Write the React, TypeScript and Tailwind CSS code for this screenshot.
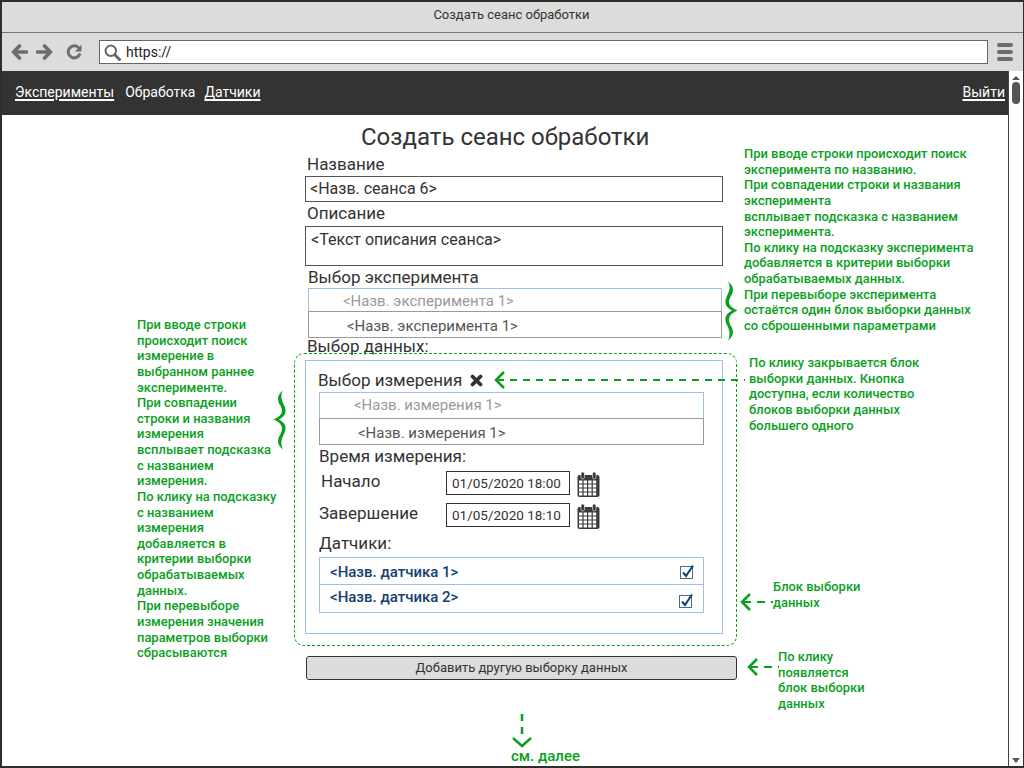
const noteClass = "absolute font-medium text-[12.95px] leading-[15.63px] text-[#0a9f1e] whitespace-pre"

function CalendarIcon() {
  return (
    <svg width="23" height="25" viewBox="0 0 23 25" className="text-[#3a3a3a]">
      <rect x="0.5" y="3" width="22" height="22" rx="2" fill="currentColor" />
      <rect x="4" y="0" width="3.5" height="7" rx="1.7" fill="currentColor" stroke="#fff" strokeWidth="0.6" />
      <rect x="15.5" y="0" width="3.5" height="7" rx="1.7" fill="currentColor" stroke="#fff" strokeWidth="0.6" />
      {[2, 6.6, 11.2, 15.8].map((x) =>
        [9, 13, 17, 21].map((y) => (
          <rect key={`${x}-${y}`} x={x} y={y - 0.5} width="3.4" height="3" fill="#fff" />
        ))
      )}
    </svg>
  )
}

function CheckIcon() {
  return (
    <svg width="16" height="16" viewBox="0 0 16 16">
      <rect x="1.5" y="2.5" width="12" height="12" fill="#fff" stroke="#4a6a90" strokeWidth="1" />
      <path d="M4 8.5 L7 12 L14 1.5" fill="none" stroke="#12406f" strokeWidth="2" />
    </svg>
  )
}

function BackIcon({ flip }: { flip?: boolean }) {
  return (
    <svg width="17" height="16" viewBox="0 0 17 16" className={flip ? '-scale-x-100' : ''}>
      <path d="M8.5 2 L2.5 8 L8.5 14 M3 8 H15.5" fill="none" stroke="#6d6d6d" strokeWidth="3.6" strokeLinecap="round" strokeLinejoin="round" />
    </svg>
  )
}

function ReloadIcon() {
  return (
    <svg width="16" height="16" viewBox="0 0 16 16">
      <path d="M13 4.2 A6 6 0 1 0 14 9.5" fill="none" stroke="#6d6d6d" strokeWidth="3" />
      <path d="M15.5 0.8 V7.5 H9 Z" fill="#6d6d6d" />
    </svg>
  )
}

function SearchIcon() {
  return (
    <svg width="17" height="17" viewBox="0 0 17 17">
      <circle cx="6.8" cy="6.8" r="5.2" fill="none" stroke="#666" strokeWidth="2" />
      <path d="M10.8 10.8 L15.5 15.5" fill="none" stroke="#666" strokeWidth="3" strokeLinecap="round" />
    </svg>
  )
}

function CloseIcon() {
  return (
    <svg width="13" height="13" viewBox="0 0 13 13">
      <path d="M2.5 2.5 L10.5 10.5 M10.5 2.5 L2.5 10.5" fill="none" stroke="#333" strokeWidth="3.8" strokeLinecap="round" />
    </svg>
  )
}

// left pointing dashed arrow used by the notes
function ArrowLeft({ className, width, dash }: { className: string; width: number; dash: string }) {
  return (
    <svg width={width} height="18" viewBox={`0 0 ${width} 18`} className={`absolute ${className}`}>
      <path d="M11 1 L3 9 L11 17" fill="none" stroke="#0a9f1e" strokeWidth="2.5" />
      <path d={`M4 9 H${width}`} fill="none" stroke="#0a9f1e" strokeWidth="2" strokeDasharray={dash} />
    </svg>
  )
}

function Brace({ className, flip }: { className: string; flip?: boolean }) {
  return (
    <svg width="15" height="60" viewBox="0 0 15 60" className={`absolute ${className} ${flip ? '-scale-x-100' : ''}`}>
      <path
        d="M10 0.5 C4 5 4 10 7 15 C10 20 11 25 0.5 29.5 C11 34 10 40 7 45 C4 50 4 55 10 59.5 C7.5 54 8 50 11 44 C14 38 13 33 6 29.5 C13 26 14 21 11 15 C8 9 7.5 5 10 0.5 Z"
        fill="#0a9f1e"
      />
    </svg>
  )
}

export default function App() {
  return (
    <div className="relative w-[1024px] h-[768px] overflow-hidden bg-white flex flex-col font-['Roboto',sans-serif] text-[#333] border-t-2 border-l-2 border-b-2 border-r border-[#2e2e2e]">
      {/* Title bar */}
      <div className="h-[31px] shrink-0 bg-[#dcdcda] border-b border-[#777] flex items-center justify-center text-[13px] pb-[5px] -ml-0.5">
        Создать сеанс обработки
      </div>

      {/* Toolbar */}
      <div className="h-[38px] shrink-0 bg-[#dcdcda] flex items-center pl-[9px] pr-[7px]">
        <BackIcon />
        <span className="ml-2"><BackIcon flip /></span>
        <span className="ml-[13px]"><ReloadIcon /></span>
        <div className="ml-[17px] h-[24px] w-[889px] bg-white border border-[#666] flex items-center pl-[4px] gap-[5px] text-[14px] text-[#222]">
          <SearchIcon />
          https://
        </div>
        <div className="ml-[9px] flex flex-col gap-[3px]">
          <div className="w-[16px] h-[4px] rounded-full bg-[#6d6d6d]" />
          <div className="w-[16px] h-[4px] rounded-full bg-[#6d6d6d]" />
          <div className="w-[16px] h-[4px] rounded-full bg-[#6d6d6d]" />
        </div>
      </div>

      <div className="relative flex-1 min-h-0">
        {/* Nav bar */}
        <div className="h-[44px] mr-[15px] bg-[#333] flex items-center pl-[13px] pr-[3px] pb-px text-[14px] text-white gap-[11px]">
          <span className="underline underline-offset-2 decoration-[1.5px]">Эксперименты</span>
          <span>Обработка</span>
          <span className="underline underline-offset-2 decoration-[1.5px] -ml-[2px]">Датчики</span>
          <span className="underline underline-offset-2 decoration-[1.5px] ml-auto">Выйти</span>
        </div>

        {/* Scrollbar */}
        <div className="absolute right-0 top-0 bottom-0 w-[15px] bg-white border-l border-[#444] flex flex-col items-center">
          <div className="mt-[5px] w-0 h-0 border-x-[4px] border-x-transparent border-b-[4px] border-b-[#555]" />
          <div className="mt-[2px] w-[8px] h-[22px] rounded-full bg-[#555]" />
          <div className="mt-auto mb-[3px] w-0 h-0 border-x-[4px] border-x-transparent border-t-[5px] border-t-[#555]" />
        </div>

        {/* Form column */}
        <div className="ml-[303px] w-[432px] flex flex-col">
          <h1 className="text-[24px] leading-[28px] mt-[8px] ml-[56px] whitespace-nowrap">Создать сеанс обработки</h1>
          <div className="text-[17px] leading-[20px] mt-[3px] ml-[2px]">Название</div>
          <div className="w-[418px] h-[26px] border border-[#555] flex items-center pl-[4px] text-[16px] mt-[2px]">&lt;Назв. сеанса 6&gt;</div>
          <div className="text-[17px] leading-[20px] mt-[1px] ml-[2px]">Описание</div>
          <div className="w-[418px] h-[40px] border border-[#555] pl-[5px] pt-[1px] text-[16px] mt-[3px]">&lt;Текст описания сеанса&gt;</div>
          <div className="text-[17px] leading-[20px] mt-[1px] ml-[3px]">Выбор эксперимента</div>
          <div className="ml-[3px] w-[414px] mt-[1px] text-[15px]">
            <div className="h-[23px] border border-b-0 border-[#9cbff0] flex items-center pl-[34px] pt-[2px] text-[#999]">&lt;Назв. эксперимента 1&gt;</div>
            <div className="h-[27px] border border-[#999] flex items-center pl-[38px] pt-[3px] text-[#555]">&lt;Назв. эксперимента 1&gt;</div>
          </div>
          <div className="text-[17px] leading-[18px] -mt-px ml-[2px]">Выбор данных:</div>

          {/* Selection block */}
          <div className="-ml-[11px] -mt-[2px] w-[443px] h-[293px] border border-dashed border-[#0a9f1e] rounded-[10px] pt-[6px] pl-[10px]">
            <div className="w-[418px] h-[274px] border border-[#9cbff0] pl-[13px] flex flex-col">
              <div className="flex items-center text-[17px] leading-[20px] mt-[9px] ml-[-1px] gap-[8px]">
                Выбор измерения
                <CloseIcon />
              </div>
              <div className="w-[385px] mt-[2px] text-[15px]">
                <div className="h-[26px] border border-b-0 border-[#9cbff0] flex items-center pl-[34px] text-[#999]">&lt;Назв. измерения 1&gt;</div>
                <div className="h-[27px] border border-[#999] flex items-center pl-[38px] pt-[3px] text-[#555]">&lt;Назв. измерения 1&gt;</div>
              </div>
              <div className="text-[17px] leading-[20px] mt-[1px]">Время измерения:</div>
              <div className="flex items-center mt-[5px] h-[24px]">
                <span className="w-[127px] pl-[2px] text-[17px] -mt-[3px]">Начало</span>
                <div className="w-[124px] h-[24px] border border-[#333] flex items-center pl-[5px] text-[13.5px]">01/05/2020 18:00</div>
                <span className="ml-[7px] mt-[2px]"><CalendarIcon /></span>
              </div>
              <div className="flex items-center mt-[8px] h-[24px]">
                <span className="w-[127px] text-[17px] -mt-[3px]">Завершение</span>
                <div className="w-[124px] h-[24px] border border-[#333] flex items-center pl-[5px] text-[13.5px]">01/05/2020 18:10</div>
                <span className="ml-[7px] mt-[2px]"><CalendarIcon /></span>
              </div>
              <div className="text-[17px] leading-[20px] mt-[6px]">Датчики:</div>
              <div className="w-[385px] h-[56px] mt-[4px] border border-[#9cbff0] text-[15px] font-medium text-[#12406f]">
                <div className="h-[27px] border-b border-[#9cbff0] flex items-center justify-between pl-[10px] pr-[8px] pt-[2px]">
                  &lt;Назв. датчика 1&gt;
                  <CheckIcon />
                </div>
                <div className="h-[27px] flex items-center justify-between pl-[10px] pr-[9px] pb-[2px]">
                  &lt;Назв. датчика 2&gt;
                  <span className="mt-[7px]"><CheckIcon /></span>
                </div>
              </div>
            </div>
          </div>

          <button className="w-[431px] h-[24px] mt-[10px] ml-px bg-[#dcdcdc] border border-[#333] rounded-[3px] text-[13px] flex items-center justify-center">
            Добавить другую выборку данных
          </button>
        </div>

        {/* Notes, offsets relative to the area under the toolbar */}
        <div className={noteClass} style={{ left: 742, top: 75 }}>{`При вводе строки происходит поиск
эксперимента по названию.
При совпадении строки и названия
эксперимента
всплывает подсказка с названием
эксперимента.
По клику на подсказку эксперимента
добавляется в критерии выборки
обрабатываемых данных.
При перевыборе эксперимента
остаётся один блок выборки данных
со сброшенными параметрами`}</div>
        <div className={noteClass} style={{ left: 135, top: 246 }}>{`При вводе строки
происходит поиск
измерение в
выбранном раннее
эксперименте.
При совпадении
строки и названия
измерения
всплывает подсказка
с названием
измерения.
По клику на подсказку
с названием
измерения
добавляется в
критерии выборки
обрабатываемых
данных.
При перевыборе
измерения значения
параметров выборки
сбрасываются`}</div>
        <div className={noteClass} style={{ left: 747, top: 284 }}>{`По клику закрывается блок
выборки данных. Кнопка
доступна, если количество
блоков выборки данных
большего одного`}</div>
        <div className={noteClass} style={{ left: 771, top: 508 }}>{`Блок выборки
данных`}</div>
        <div className={noteClass} style={{ left: 776, top: 578 }}>{`По клику
появляется
блок выборки
данных`}</div>
        <div className="absolute left-[509px] top-[674px] text-[15px] font-medium text-[#0a9f1e]">см. далее</div>

        <Brace className="left-[721px] top-[210px]" flip />
        <Brace className="left-[271px] top-[319px]" />
        <ArrowLeft className="left-[491px] top-[300px]" width={252} dash="7 6" />
        <ArrowLeft className="left-[737px] top-[522px]" width={34} dash="8 6" />
        <ArrowLeft className="left-[744px] top-[587px]" width={33} dash="8 6" />
        <svg width="24" height="36" viewBox="0 0 24 36" className="absolute left-[508px] top-[643px]">
          <path d="M12 0 V24" fill="none" stroke="#0a9f1e" strokeWidth="2.5" strokeDasharray="7 6" />
          <path d="M3 24 L12 32 L21 24" fill="none" stroke="#0a9f1e" strokeWidth="2.5" />
        </svg>
      </div>
    </div>
  )
}
